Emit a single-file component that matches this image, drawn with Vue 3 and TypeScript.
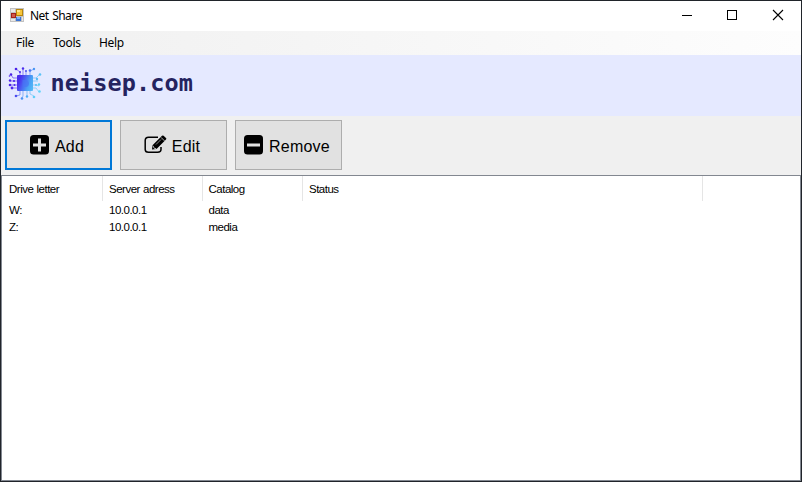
<script setup lang="ts">
import { ref } from 'vue'

interface Share {
  drive: string
  server: string
  catalog: string
  status: string
}

const menus = ['File', 'Tools', 'Help']
const columns = ['Drive letter', 'Server adress', 'Catalog', 'Status']
const shares = ref<Share[]>([
  { drive: 'W:', server: '10.0.0.1', catalog: 'data', status: '' },
  { drive: 'Z:', server: '10.0.0.1', catalog: 'media', status: '' },
])
</script>

<template>
  <div class="window">
    <header class="titlebar">
      <svg class="app-icon" width="14" height="14" viewBox="0 0 14 14" shape-rendering="crispEdges">
        <rect width="14" height="14" fill="#c2c2c2" />
        <rect x="1" y="1" width="4" height="3" fill="#e8e8e8" />
        <rect x="1" y="11" width="4" height="2" fill="#e8e8e8" />
        <rect x="12" y="9" width="1" height="4" fill="#e8e8e8" />
        <rect x="1" y="5" width="5" height="5" fill="#a32018" />
        <rect x="2" y="6" width="3" height="3" fill="#d0584c" />
        <rect x="6" y="1" width="7" height="7" fill="#b8860b" />
        <rect x="7" y="2" width="5" height="5" fill="#f7c63c" />
        <rect x="7" y="2" width="3" height="2" fill="#ffe68c" />
        <rect x="6" y="9" width="5" height="4" fill="#3b74d6" />
        <rect x="7" y="9" width="3" height="2" fill="#7fb0f5" />
      </svg>
      <span class="title">Net Share</span>
      <div class="controls">
        <svg width="46" height="30" viewBox="0 0 46 30" shape-rendering="crispEdges"><path d="M18 14.5h10" stroke="#000" /></svg>
        <svg width="46" height="30" viewBox="0 0 46 30" shape-rendering="crispEdges"><rect x="17.5" y="9.5" width="9" height="9" fill="none" stroke="#000" /></svg>
        <svg width="46" height="30" viewBox="0 0 46 30"><path d="M17 9l10 10M27 9l-10 10" stroke="#000" stroke-width="1.1" /></svg>
      </div>
    </header>

    <nav class="menubar">
      <span v-for="m in menus" :key="m" :class="['menu', m.toLowerCase()]">{{ m }}</span>
    </nav>

    <section class="banner">
      <svg class="logo" width="34" height="34" viewBox="0 0 34 34">
        <defs>
          <linearGradient id="chip" gradientUnits="userSpaceOnUse" x1="3" y1="10" x2="31" y2="21">
            <stop offset="0" stop-color="#4a1fe8" />
            <stop offset=".3" stop-color="#4a30ee" />
            <stop offset=".65" stop-color="#4aa2f5" />
            <stop offset="1" stop-color="#62d4f8" />
          </linearGradient>
        </defs>
        <rect x="9" y="8" width="16" height="16" rx="1" fill="url(#chip)" />
        <path d="M14.5 13h2.5q4 0 4 3.5t-4 3.500h-2.500z" fill="#4776f4" opacity=".65" />
        <g fill="none" stroke="url(#chip)" stroke-width=".6">
          <path d="M12 8V5L8 2M15 8V2M18 8V4M22 8V4L26 2" />
          <path d="M12 24v4l-4 1M15 24v5l-1 2M19 24v6M22 24v3l4 2" />
          <path d="M9 11H5L3 7.500M9 14H2M9 18H5L2 18M9 21H3" />
          <path d="M25 11h3l4-4M25 14h5M25 18h3l3 1M25 21h3l3 4" />
        </g>
        <g fill="url(#chip)">
          <circle cx="8" cy="2" r="1.300" /><circle cx="15" cy="1.500" r="1.200" /><circle cx="12" cy="5" r="1" /><circle cx="18" cy="4" r="1" /><circle cx="22" cy="3.500" r="1.300" /><circle cx="26" cy="2" r="1.200" />
          <circle cx="3" cy="7.500" r="1.300" /><circle cx="1.500" cy="9" r=".8" /><circle cx="2" cy="13.500" r="1.200" /><circle cx="6" cy="14" r="1.100" /><circle cx="2" cy="18" r="1.300" /><circle cx="4" cy="21" r="1.400" /><circle cx="6.500" cy="18" r="1" />
          <circle cx="32" cy="7.500" r="1.300" /><circle cx="29" cy="12" r="1.200" /><circle cx="28" cy="18" r="1.100" /><circle cx="31" cy="17.500" r="1.200" /><circle cx="31.500" cy="24.500" r="1.300" />
          <circle cx="8" cy="29" r="1.300" /><circle cx="14" cy="31.500" r="1.300" /><circle cx="19" cy="29.500" r="1.200" /><circle cx="26" cy="30" r="1.300" />
        </g>
      </svg>
      <span class="brand">neisep.com</span>
    </section>

    <section class="toolbar">
      <button class="btn focused">
        <svg width="20" height="20" viewBox="0 0 20 20"><rect width="19" height="19.500" rx="3.500" /><path d="M9.500 3.500v13M3 10h13" stroke="#e1e1e1" stroke-width="3" /></svg>
        <span>Add</span>
      </button>
      <button class="btn edit">
        <svg width="23" height="20" viewBox="0 0 23 20">
          <path d="M14 2.200H4.500Q1.200 2.200 1.200 5.500v9Q1.200 17.300 4.500 17.300h9q3.500 0 3.500-3V12" fill="none" stroke="#000" stroke-width="1.500" />
          <path d="M8 14.500l.5-4.300L18 .8q.8-.8 1.600 0L22 3q.8.8 0 1.600L12.500 14z" />
          <path d="M17 2.400l3.500 3.500M9 10.800l1.200 2.500 2 .3" stroke="#e1e1e1" stroke-width=".8" fill="none" />
          <path d="M12 9.500l5-5" stroke="#e1e1e1" stroke-width=".6" />
        </svg>
        <span>Edit</span>
      </button>
      <button class="btn remove">
        <svg width="20" height="20" viewBox="0 0 20 20"><rect width="19" height="19.500" rx="3.500" /><path d="M3 10h13" stroke="#e1e1e1" stroke-width="3" /></svg>
        <span>Remove</span>
      </button>
    </section>

    <main class="list">
      <div class="row head">
        <span v-for="c in columns" :key="c" class="cell">{{ c }}</span>
      </div>
      <div v-for="s in shares" :key="s.drive" class="row">
        <span class="cell">{{ s.drive }}</span>
        <span class="cell">{{ s.server }}</span>
        <span class="cell">{{ s.catalog }}</span>
        <span class="cell">{{ s.status }}</span>
      </div>
    </main>
  </div>
</template>

<style>
body { margin: 0; overflow: hidden; }
</style>

<style scoped>
.window {
  box-sizing: border-box;
  width: 802px;
  height: 482px;
  border: 1px solid #20242a;
  background: #f0f0f0;
  display: flex;
  flex-direction: column;
  color: #000;
  font-family: "Noto Sans", "Open Sans", sans-serif;
  font-size: 12px;
}
.titlebar { height: 30px; flex: none; background: #fff; display: flex; align-items: center; }
.app-icon { margin: 0 0 2px 9px; }
.title { margin-left: 6px; letter-spacing: -.55px; word-spacing: 1px; line-height: 16px; }
.controls { margin-left: auto; display: flex; margin-right: -1px; }
.menubar {
  height: 24px;
  flex: none;
  background: linear-gradient(90deg, #f0f0f0, #fdfdfd);
  display: flex;
  align-items: center;
}
.menu { line-height: 16px; letter-spacing: -.3px; }
.file { width: 37px; margin-left: 15px; }
.tools { width: 46px; }
.banner { height: 61px; flex: none; background: #e5e9ff; display: flex; align-items: flex-start; }
.logo { margin: 12px 0 0 7px; }
.brand {
  margin: 14px 0 0 8.5px;
  font: bold 23.500px/28px "DejaVu Sans Mono", monospace;
  letter-spacing: .1px;
  color: #24235f;
}
.toolbar { height: 59px; flex: none; display: flex; gap: 8px; padding: 4px; box-sizing: border-box; }
.btn {
  width: 107px;
  height: 50px;
  box-sizing: border-box;
  border: 1px solid #adadad;
  background: #e1e1e1;
  padding: 0 3px 0 0;
  display: flex;
  align-items: center;
  justify-content: center;
  gap: 5px;
  color: #000;
  font: 16px/20px "Liberation Sans", Arial, sans-serif;
  letter-spacing: .2px;
}
.btn span { padding-top: 3px; }
.focused { border: 2px solid #0078d7; }
.list {
  flex: 1;
  border: 1px solid #828790;
  background: #fff;
  font: 11.500px/17px "Liberation Sans", Arial, sans-serif;
  letter-spacing: -.5px;
  word-spacing: .5px;
}
.row { display: grid; grid-template-columns: 101px 100px 100px 400px; height: 17px; line-height: 18px; }
.cell { padding-left: 6px; box-sizing: border-box; }
.cell:first-child { padding-left: 7px; }
.cell:nth-child(3) { padding-left: 5.5px; }
.head { height: 25px; line-height: 27px; }
.head .cell { height: 25px; border-right: 1px solid #e5e5e5; }
</style>
